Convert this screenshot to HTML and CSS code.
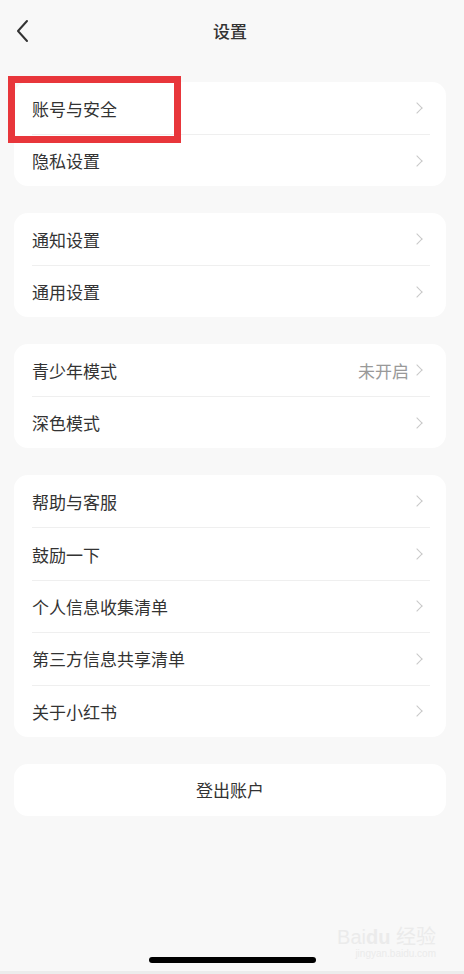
FILE: index.html
```html
<!DOCTYPE html>
<html lang="zh-CN">
<head>
    <meta charset="UTF-8">
    <meta name="viewport" content="width=device-width, initial-scale=1.0">
    <title>设置</title>
    <link rel="stylesheet" href="styles.css">
</head>
<body>
    <div class="page">
        <header class="topbar">
            <svg class="back" width="14" height="24" viewBox="0 0 14 24">
                <path d="M12 2 L3 12 L12 22" fill="none" stroke="#333" stroke-width="2" stroke-linecap="round" stroke-linejoin="round"/>
            </svg>
            <h1 class="title">设置</h1>
        </header>

        <div class="card">
            <div class="row"><span>账号与安全</span><i class="arrow"></i></div>
            <div class="row"><span>隐私设置</span><i class="arrow"></i></div>
        </div>

        <div class="card">
            <div class="row"><span>通知设置</span><i class="arrow"></i></div>
            <div class="row"><span>通用设置</span><i class="arrow"></i></div>
        </div>

        <div class="card">
            <div class="row"><span>青少年模式</span><em class="value">未开启</em><i class="arrow"></i></div>
            <div class="row"><span>深色模式</span><i class="arrow"></i></div>
        </div>

        <div class="card long">
            <div class="row"><span>帮助与客服</span><i class="arrow"></i></div>
            <div class="row"><span>鼓励一下</span><i class="arrow"></i></div>
            <div class="row"><span>个人信息收集清单</span><i class="arrow"></i></div>
            <div class="row"><span>第三方信息共享清单</span><i class="arrow"></i></div>
            <div class="row"><span>关于小红书</span><i class="arrow"></i></div>
        </div>

        <div class="card logout">登出账户</div>

        <div class="home-bar"></div>

        <!-- 标注框 -->
        <div class="mark"></div>
        <div class="watermark">Bai<b>du</b> 经验<small>jingyan.baidu.com</small></div>
    </div>
</body>
</html>
```

FILE: styles.css
```css
body {
    margin: 0;
    background-color: #f8f8f8;
    font-family: "Noto Sans CJK SC", "Noto Sans", sans-serif;
    color: #333;
}

.page {
    position: relative;
    height: 974px;
    box-sizing: border-box;
    display: flex;
    flex-direction: column;
    border-bottom: 3px solid #ececec;
}

.topbar {
    height: 60px;
    position: relative;
    display: flex;
    align-items: center;
    justify-content: center;
    margin-bottom: 22px;
}

.back {
    position: absolute;
    left: 15px;
    top: 19px;
}

.title {
    margin: 0 0 0 -4px;
    font-size: 17px;
    font-weight: 500;
    color: #333;
}

.card {
    margin: 0 18px 27px 14px;
    background-color: #fff;
    border-radius: 14px;
}

.row {
    height: 52px;
    margin: 0 16px 0 18px;
    display: flex;
    align-items: center;
    font-size: 17px;
    border-top: 1px solid #efefef;
    box-sizing: border-box;
}

.long .row {
    height: 52.4px;
}

.row:first-child {
    border-top: none;
}

.row span {
    flex: 1;
}

.value {
    font-style: normal;
    color: #999;
    margin-right: 4px;
}

.arrow {
    width: 7px;
    height: 7px;
    border-top: 1.5px solid #c8c8c8;
    border-right: 1.5px solid #c8c8c8;
    transform: rotate(45deg);
    margin-right: 9px;
}

.logout {
    height: 52px;
    display: flex;
    align-items: center;
    justify-content: center;
    font-size: 17px;
}

.home-bar {
    margin: auto auto 8px;
    width: 167px;
    height: 6px;
    border-radius: 3px;
    background-color: #000;
}

.mark {
    position: absolute;
    left: 8px;
    top: 76px;
    width: 173px;
    height: 67px;
    box-sizing: border-box;
    border: 7px solid #e8363b;
}

.watermark {
    position: absolute;
    right: 28px;
    bottom: 12px;
    font-family: "Liberation Sans", sans-serif;
    font-size: 20px;
    color: #ebebeb;
    text-align: right;
    line-height: 1.1;
}

.watermark b {
    font-weight: bold;
}

.watermark small {
    display: block;
    font-size: 10px;
}
```
